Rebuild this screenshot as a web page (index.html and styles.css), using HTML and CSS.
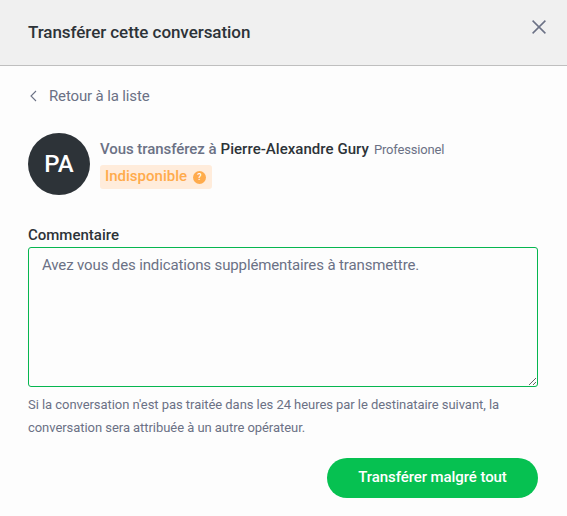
FILE: index.html
```html
<!DOCTYPE html>
<html lang="fr">
<head>
  <meta charset="UTF-8" />
  <meta name="viewport" content="width=device-width, initial-scale=1.0" />
  <title>Transférer cette conversation</title>
  <link rel="stylesheet" href="styles.css">
</head>
<body>

  <header class="modal-header">
    <h2>Transférer cette conversation</h2>
    <button class="close-btn" type="button" aria-label="Fermer">
      <svg width="14" height="14" viewBox="0 0 14 14" fill="none" stroke="currentColor" stroke-width="1.5">
        <path d="M0.6 0.6 L13.4 13.4 M13.4 0.6 L0.6 13.4" />
      </svg>
    </button>
  </header>

  <main class="modal-body">
    <a class="back-link">
      <svg width="7" height="12" viewBox="0 0 7 12" fill="none" stroke="currentColor" stroke-width="1.1">
        <path d="M6 1 L1 6 L6 11" />
      </svg>
      <span>Retour à la liste</span>
    </a>

    <div class="recipient">
      <div class="avatar">PA</div>
      <div class="recipient-info">
        <div class="recipient-line">
          <span class="intro">Vous transférez à</span>
          <span class="name">Pierre-Alexandre Gury</span>
          <span class="role">Professionel</span>
        </div>
        <div class="status">
          <span>Indisponible</span>
          <span class="help">?</span>
        </div>
      </div>
    </div>

    <label class="comment-label" for="comment">Commentaire</label>
    <textarea class="comment" id="comment" placeholder="Avez vous des indications supplémentaires à transmettre."></textarea>

    <p class="hint">Si la conversation n'est pas traitée dans les 24 heures par le destinataire suivant, la<br>conversation sera attribuée à un autre opérateur.</p>

    <div class="actions">
      <button class="btn" type="button">Transférer malgré tout</button>
    </div>
  </main>

</body>
</html>
```

FILE: styles.css
```css
* {
  box-sizing: border-box;
}

body {
  font-family: Roboto, "Liberation Sans", sans-serif;
  margin: 0;
  background: #fdfdfd;
  color: #6b7185;
  font-size: 15px;
}

.modal-header {
  display: flex;
  justify-content: space-between;
  align-items: flex-start;
  height: 66px;
  padding: 20px 21px 0 28px;
  background: #f0f0f0;
  border-bottom: 1px solid #bfbfbf;
}

.modal-header h2 {
  margin: 0;
  font-size: 17px;
  line-height: 25px;
  font-weight: 500;
  letter-spacing: -0.06px;
  color: #2d3338;
}

.close-btn {
  display: flex;
  padding: 0;
  border: none;
  background: none;
  color: #6b7185;
  cursor: pointer;
}

.modal-body {
  padding: 20px 29px 18px 28px;
}

.back-link {
  display: flex;
  align-items: center;
  gap: 12px;
  height: 20px;
  padding-left: 2px;
  letter-spacing: -0.14px;
  cursor: pointer;
}

.recipient {
  display: flex;
  gap: 10px;
  margin-top: 27px;
}

.avatar {
  display: flex;
  align-items: center;
  justify-content: center;
  width: 62px;
  height: 62px;
  border-radius: 50%;
  background: #2d3338;
  color: #fff;
  font-size: 24px;
  font-weight: 500;
  padding-bottom: 1px;
}

.recipient-line {
  display: flex;
  align-items: baseline;
  height: 32px;
  line-height: 32px;
  white-space: nowrap;
}

.intro {
  font-weight: 500;
  letter-spacing: -0.06px;
  margin-right: 4px;
}

.name {
  font-weight: 500;
  letter-spacing: 0.04px;
  color: #2d3338;
  margin-right: 5px;
}

.role {
  font-size: 13px;
  letter-spacing: -0.17px;
}

.status {
  display: flex;
  align-items: center;
  justify-content: space-between;
  width: 112px;
  height: 24px;
  padding: 0 6px 0 5px;
  border-radius: 3px;
  background: #ffecdb;
  color: #ffab4c;
  font-weight: 500;
  line-height: 22px;
}

.status span:first-child {
  padding-bottom: 2px;
}

.help {
  width: 13px;
  height: 13px;
  border-radius: 50%;
  background: #ffab4c;
  color: #fff;
  font-size: 9px;
  line-height: 13px;
  text-align: center;
}

.comment-label {
  display: block;
  margin-top: 29px;
  height: 23px;
  line-height: 22px;
  font-weight: 500;
  color: #2d3338;
}

.comment {
  display: block;
  width: 100%;
  height: 140px;
  padding: 7px 13px;
  border: 1px solid #06b650;
  border-radius: 3px;
  outline: none;
  background: #fdfdfd;
  font-family: inherit;
  font-size: 15px;
  line-height: 20px;
  letter-spacing: -0.13px;
  resize: both;
}

.comment::placeholder {
  color: #6b7185;
}

.hint {
  margin: 6px 0 0;
  font-size: 13px;
  line-height: 23px;
  letter-spacing: -0.05px;
  white-space: nowrap;
}

.actions {
  display: flex;
  justify-content: flex-end;
  margin-top: 19px;
}

.btn {
  width: 211px;
  height: 40px;
  padding: 0 0 2px;
  border: none;
  border-radius: 20px;
  background: #06c151;
  color: #fff;
  font-family: inherit;
  font-size: 15px;
  font-weight: 500;
  letter-spacing: -0.08px;
  cursor: pointer;
}
```
